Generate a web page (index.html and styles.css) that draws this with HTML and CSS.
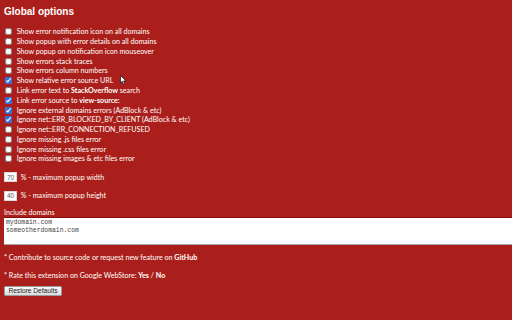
FILE: index.html
```html
<!DOCTYPE html>
<html lang="en">
<head>
    <meta charset="UTF-8">
    <title>Global options</title>
    <link rel="stylesheet" href="styles.css">
</head>
<body>
    <h1>Global options</h1>

    <!-- Checkbox options -->
    <ul class="options">
        <li><label><input type="checkbox"> Show error notification icon on all domains</label></li>
        <li><label><input type="checkbox"> Show popup with error details on all domains</label></li>
        <li><label><input type="checkbox"> Show popup on notification icon mouseover</label></li>
        <li><label><input type="checkbox"> Show errors stack traces</label></li>
        <li><label><input type="checkbox"> Show errors column numbers</label></li>
        <li><label><input type="checkbox" checked> Show relative error source URL</label></li>
        <li><label><input type="checkbox"> Link error text to <b>StackOverflow</b> search</label></li>
        <li><label><input type="checkbox" checked> Link error source to <b>view-source:</b></label></li>
        <li><label><input type="checkbox" checked> Ignore external domains errors (AdBlock &amp; etc)</label></li>
        <li><label><input type="checkbox" checked> Ignore net::ERR_BLOCKED_BY_CLIENT (AdBlock &amp; etc)</label></li>
        <li><label><input type="checkbox"> Ignore net::ERR_CONNECTION_REFUSED</label></li>
        <li><label><input type="checkbox"> Ignore missing .js files error</label></li>
        <li><label><input type="checkbox"> Ignore missing .css files error</label></li>
        <li><label><input type="checkbox"> Ignore missing images &amp; etc files error</label></li>
    </ul>

    <!-- Popup size -->
    <div class="num-row first"><input type="text" class="num" value="70"> % - maximum popup width</div>
    <div class="num-row"><input type="text" class="num" value="40"> % - maximum popup height</div>

    <label class="field-label" for="domains">Include domains</label>
    <textarea id="domains">mydomain.com
someotherdomain.com</textarea>

    <p class="note first">* Contribute to source code or request new feature on <a href="#">GitHub</a></p>
    <p class="note">* Rate this extension on Google WebStore: <a href="#">Yes</a> / <a href="#">No</a></p>

    <button class="restore">Restore Defaults</button>

    <!-- mouse pointer -->
    <svg class="cursor" width="7" height="10" viewBox="0 0 7 10">
        <path d="M0.5 0.5 L0.5 8 L2.3 6.3 L3.6 9.3 L4.8 8.8 L3.6 5.9 L6 5.9 Z" fill="#fff" stroke="#222" stroke-width="0.8"/>
    </svg>
</body>
</html>
```

FILE: styles.css
```css
/* Page */
html {
    overflow: hidden;
}

body {
    margin: 0;
    padding: 0 4px;
    height: 320px;
    position: relative;
    background-color: #aa1f1b;
    color: #fff;
    font-family: Lato, "Liberation Sans", sans-serif;
    font-size: 7.1px;
}

h1 {
    margin: 6px 0 0;
    font-family: "Liberation Sans", Arial, sans-serif;
    font-size: 10px;
    line-height: 11px;
    font-weight: bold;
}

/* Checkbox list */
.options {
    list-style: none;
    margin: 10px 0 0;
    padding: 0;
}

.options li {
    height: 9.77px;
    display: flex;
    align-items: center;
}

.options label {
    display: flex;
    align-items: center;
    white-space: pre;
}

.options input {
    width: 7px;
    height: 7px;
    margin: 0 3px 0 1px;
    accent-color: #2f6fe4;
}

/* Number inputs */
.num-row {
    height: 10px;
    display: flex;
    align-items: center;
    margin-top: 8.7px;
    white-space: pre;
}

.num-row.first {
    margin-top: 8.4px;
}

.num {
    box-sizing: border-box;
    width: 13px;
    height: 10px;
    margin: 0 2px 0 0;
    padding: 0 0 0 2px;
    border: 1px solid #d8d8d8;
    background: #fff;
    color: #555;
    font-family: "Liberation Sans", Arial, sans-serif;
    font-size: 6.4px;
    outline: none;
}

/* Domains */
.field-label {
    display: block;
    margin-top: 8px;
    line-height: 8px;
}

textarea {
    display: block;
    box-sizing: border-box;
    width: 520px;
    height: 28px;
    margin: 0;
    padding: 1px 2px;
    border: none;
    border-top: 1px solid #8a0c0a;
    border-bottom: 1px solid #a8a8a8;
    background: #fff;
    color: #444;
    font-family: "Liberation Mono", monospace;
    font-size: 6.4px;
    line-height: 8.6px;
    resize: none;
    outline: none;
}

/* Notes */
.note {
    margin: 9.6px 0 0;
    line-height: 8px;
}

.note.first {
    margin-top: 9.7px;
}

.note a {
    color: #fff;
    font-weight: bold;
    text-decoration: none;
}

/* Button */
.restore {
    display: block;
    box-sizing: border-box;
    width: 58px;
    height: 10px;
    margin-top: 6px;
    padding: 0;
    border: 1px solid #9a9a9a;
    border-radius: 1px;
    background: linear-gradient(#fafafa, #dcdcdc);
    color: #222;
    font-family: "Liberation Sans", Arial, sans-serif;
    font-size: 6.6px;
    line-height: 8px;
}

.cursor {
    position: absolute;
    left: 120px;
    top: 75px;
}
```
